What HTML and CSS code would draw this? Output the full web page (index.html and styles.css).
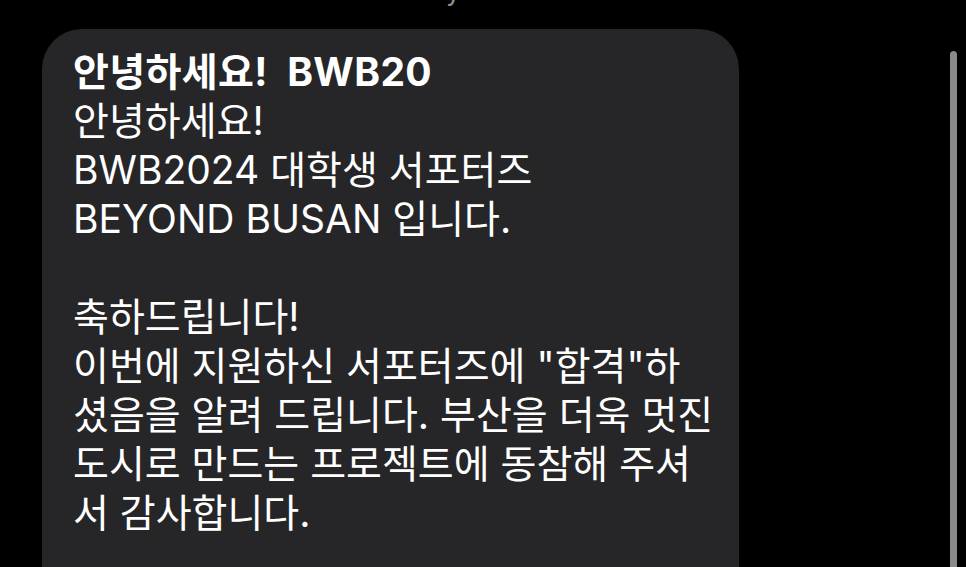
FILE: index.html
```html
<!DOCTYPE html>
<html lang="ko">
<head>
<meta charset="utf-8">
<link rel="stylesheet" href="styles.css">
</head>
<body>
<div class="screen">
  <div class="top-clip"><span class="top-glyph">y</span></div>
  <div class="bubble">
    <div class="line title">안녕하세요!&nbsp; BWB20</div>
    <div class="line">안녕하세요!</div>
    <div class="line">BWB2024 대학생 서포터즈</div>
    <div class="line">BEYOND BUSAN 입니다.</div>
    <div class="line blank">&nbsp;</div>
    <div class="line">축하드립니다!</div>
    <div class="line">이번에 지원하신 서포터즈에 "합격"하</div>
    <div class="line">셨음을 알려 드립니다. 부산을 더욱 멋진</div>
    <div class="line">도시로 만드는 프로젝트에 동참해 주셔</div>
    <div class="line">서 감사합니다.</div>
    <div class="line blank">&nbsp;</div>
  </div>
  <div class="scrollbar"></div>
</div>
</body>
</html>
```
FILE: styles.css
```css
html, body {
  margin: 0;
  padding: 0;
  background: #000;
  overflow: hidden;
}
.screen {
  position: relative;
  width: 966px;
  height: 567px;
  overflow: hidden;
  background: #000;
}
.top-clip {
  height: 29px;
  position: relative;
  overflow: hidden;
}
.top-glyph {
  position: absolute;
  left: 446px;
  top: -24px;
  font-family: Inter, "Noto Sans", sans-serif;
  font-size: 26px;
  color: #8e8e93;
}
.bubble {
  margin-left: 42px;
  width: 697px;
  box-sizing: border-box;
  padding: 18px 20px 40px 31px;
  background: #262628;
  border-radius: 40px;
  color: #fff;
  font-family: Inter, "Noto Sans CJK KR", sans-serif;
  font-size: 39px;
  line-height: 49px;
  letter-spacing: 0;
}
.line {
  white-space: nowrap;
}
.title {
  font-weight: 700;
  letter-spacing: 0.01em;
}
.scrollbar {
  position: absolute;
  left: 950px;
  top: 51px;
  width: 7px;
  height: 600px;
  border-radius: 4px;
  background: #8a8a8a;
}
```
